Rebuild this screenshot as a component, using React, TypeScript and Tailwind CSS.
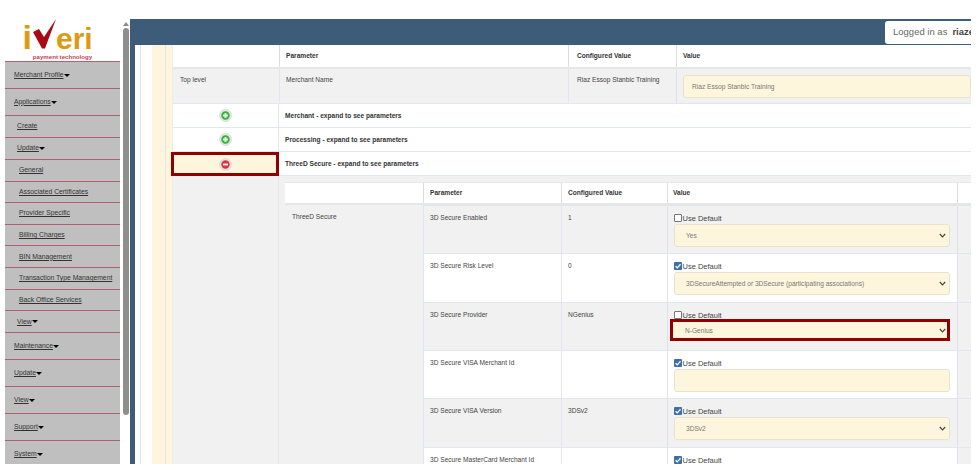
import React from 'react';

const font = 'font-["Liberation_Sans",Arial,sans-serif]';

// menu rows, indent 0 = top level, 1 = sub, 2 = sub sub
const menu = [
  { label: 'Merchant Profile', level: 0, caret: true },
  { label: 'Applications', level: 0, caret: true },
  { label: 'Create', level: 1 },
  { label: 'Update', level: 1, caret: true },
  { label: 'General', level: 2 },
  { label: 'Associated Certificates', level: 2 },
  { label: 'Provider Specific', level: 2 },
  { label: 'Billing Charges', level: 2 },
  { label: 'BIN Management', level: 2 },
  { label: 'Transaction Type Management', level: 2 },
  { label: 'Back Office Services', level: 2 },
  { label: 'View', level: 1, caret: true },
  { label: 'Maintenance', level: 0, caret: true },
  { label: 'Update', level: 0, caret: true },
  { label: 'View', level: 0, caret: true },
  { label: 'Support', level: 0, caret: true },
  { label: 'System', level: 0, caret: true },
];

const params = [
  { name: '3D Secure Enabled', conf: '1', checked: false, value: 'Yes', select: true, h: 'h-[48px]', bg: 'bg-[#f1f1f1]' },
  { name: '3D Secure Risk Level', conf: '0', checked: true, value: '3DSecureAttempted or 3DSecure (participating associations)', select: true, h: 'h-[49px]', bg: 'bg-white' },
  { name: '3D Secure Provider', conf: 'NGenius', checked: false, value: 'N-Genius', select: true, h: 'h-[48px]', bg: 'bg-[#f1f1f1]', marked: true },
  { name: '3D Secure VISA Merchant Id', conf: '', checked: true, value: '', select: false, h: 'h-[48px]', bg: 'bg-white' },
  { name: '3D Secure VISA Version', conf: '3DSv2', checked: true, value: '3DSv2', select: true, h: 'h-[49px]', bg: 'bg-[#f1f1f1]' },
  { name: '3D Secure MasterCard Merchant Id', conf: '', checked: true, value: '', select: false, h: 'h-[48px]', bg: 'bg-white', cut: true },
];

function Logo() {
  return (
    <div className="h-[42px] bg-white flex flex-col items-center">
      <svg width="80" height="33" viewBox="0 0 80 33" className="shrink-0 overflow-visible">
        <text x="-0.5" y="29.5" fontFamily="'Liberation Sans', sans-serif" fontWeight="700" fontSize="34" fill="#dd9a12">i</text>
        <path d="M10 13 L16 10 L21 18 L33 0 L22 29.5 L19 29.5 Z" fill="#a80b14" />
        <text x="33" y="29.5" fontFamily="'Liberation Sans', sans-serif" fontWeight="700" fontSize="30" fill="#dd9a12">eri</text>
      </svg>
      <span className="text-[6.1px] leading-[7px] font-bold text-[#c6424f] mt-[1px] whitespace-nowrap">payment technology</span>
    </div>
  );
}

function Sidebar() {
  return (
    <aside className="w-[115px] ml-[5px] shrink-0 bg-[#bfbfbf]">
      <Logo />
      {menu.map((m, i) => (
        <div
          key={i}
          className={`flex items-center border-t border-[#b0606e] text-[6.8px] text-[#333] whitespace-nowrap ${
            m.level === 0 ? 'h-[27px] pl-[9px]' : m.level === 1 ? 'h-[22px] pl-[12px]' : 'h-[21.6px] pl-[14px]'
          }`}
        >
          <span className="underline">{m.label}</span>
          {m.caret && <span className="w-0 h-0 border-x-[3px] border-t-[3px] border-x-transparent border-t-black" />}
        </div>
      ))}
    </aside>
  );
}

function Scrollbar() {
  return (
    <div className="w-[10px] shrink-0 flex flex-col items-center">
      <span className="mt-[3px] ml-[2px] w-0 h-0 border-x-[3px] border-b-[4px] border-x-transparent border-b-[#8a8a8a]" />
      <div className="ml-[2px] mt-[2px] w-[6px] h-[387px] rounded-[3px] bg-[#8f8f8f]" />
    </div>
  );
}

function RoundIcon({ minus }: { minus?: boolean }) {
  return (
    <svg width="13" height="13" viewBox="0 0 13 13">
      <circle cx="6.5" cy="6.5" r="6" fill="#e6e6e6" stroke="#cfcfcf" strokeWidth="0.6" />
      <circle cx="6.5" cy="6.5" r="4.2" fill={minus ? '#e0323c' : '#2fb52f'} />
      <rect x="4" y="5.6" width="5" height="1.8" fill="#fff" />
      {!minus && <rect x="5.6" y="4" width="1.8" height="5" fill="#fff" />}
    </svg>
  );
}

function UseDefault({ checked }: { checked: boolean }) {
  return (
    <div className="flex items-end h-[11px] text-[7.5px] text-[#444]">
      {checked ? (
        <svg width="8" height="8" viewBox="0 0 8 8" className="mb-[1px] mr-[0.5px]">
          <rect width="8" height="8" rx="1" fill="#3f6fa8" />
          <path d="M1.6 4.2 L3.3 5.9 L6.5 2.2" stroke="#fff" strokeWidth="1.3" fill="none" />
        </svg>
      ) : (
        <span className="mb-[1px] mr-[0.5px] w-[8px] h-[8px] rounded-[1px] border border-[#777] bg-white" />
      )}
      <span className="leading-[9px]">Use Default</span>
    </div>
  );
}

function Field({ value, select, marked }: { value: string; select: boolean; marked?: boolean }) {
  return (
    <div
      className={`flex items-center justify-between bg-[#fef6dc] text-[6.6px] text-[#777] ${
        marked
          ? 'w-[280px] h-[22px] ml-[-4px] mt-[-1px] pl-[12px] pr-[1px] pt-[1px] border-[3px] border-[#8f0000]'
          : 'w-[276px] h-[23px] mt-[1px] pl-[11px] pr-[3px] rounded-[3px] border border-[#e7e2d0]'
      }`}
    >
      <span>{value}</span>
      {select && (
        <svg width="7" height="5" viewBox="0 0 7 5" className="shrink-0">
          <path d="M0.8 1 L3.5 3.8 L6.2 1" stroke="#444" strokeWidth="1.2" fill="none" />
        </svg>
      )}
    </div>
  );
}

function NestedTable() {
  return (
    <div className="flex bg-[#f1f1f1] h-[289px] overflow-hidden">
      <div className="w-[106px] shrink-0 border-r border-[#e3e6ec]" />
      <div className="pl-[6px] pt-[6px] flex-1 min-w-0">
        <div className="grid grid-cols-[138px_138px_106px_290px_14px] h-[23px] bg-white border-t border-b-2 border-[#e6e6e6] items-center font-bold text-[6.6px] text-[#333]">
          <span />
          <span className="h-full flex items-center pl-[6px] border-l border-[#ddd]">Parameter</span>
          <span className="h-full flex items-center pl-[6px] border-l border-[#ddd]">Configured Value</span>
          <span className="h-full flex items-center pl-[5px] border-l border-[#ddd]">Value</span>
          <span className="h-full border-l border-[#ddd]" />
        </div>
        <div className="flex">
          <div className="w-[138px] shrink-0 bg-[#f1f1f1] pl-[7px] pt-[7px] text-[6.6px] text-[#444]">ThreeD Secure</div>
          <div className="flex-1 min-w-0">
            {params.map(p => (
              <div
                key={p.name}
                className={`grid grid-cols-[138px_106px_290px_14px] border-t border-[#e1e7f0] text-[6.6px] text-[#444] ${p.h} ${p.bg}`}
              >
                <span className="pl-[6px] pt-[7px] border-l border-[#e1e7f0]">{p.name}</span>
                <span className="pl-[6px] pt-[7px] border-l border-[#e1e7f0]">{p.conf}</span>
                <div className="pl-[6px] pt-[6px] border-l border-[#dde3ec]">
                  <UseDefault checked={p.checked} />
                  {!p.cut && <Field value={p.value} select={p.select} marked={p.marked} />}
                </div>
                <span className="border-l border-[#dde3ec] bg-[#f1f1f1]" />
              </div>
            ))}
          </div>
        </div>
      </div>
    </div>
  );
}

function ExpandRow({ label, minus }: { label: string; minus?: boolean }) {
  return (
    <div className="flex h-[24px] border-b border-[#e1e7f0] bg-white">
      <div
        className={`shrink-0 flex items-center justify-center ${
          minus ? 'w-[108px] h-[24px] ml-[-2px] bg-[#fef6dc] border-[3px] border-[#8f0000]' : 'w-[106px] border-r border-[#e1e7f0]'
        }`}
      >
        <RoundIcon minus={minus} />
      </div>
      <div className="pl-[6px] flex items-center font-bold text-[6.6px] text-[#333]">{label}</div>
    </div>
  );
}

function MainTable() {
  return (
    <div className="flex-1 min-w-0">
      <div className="grid grid-cols-[106px_289px_108px_295px] h-[24px] border-b-2 border-[#e6e6e6] bg-white items-center font-bold text-[6.6px] text-[#333]">
        <span />
        <span className="h-full flex items-center pl-[6px] border-l border-[#ddd]">Parameter</span>
        <span className="h-full flex items-center pl-[8px] border-l border-[#ddd]">Configured Value</span>
        <span className="h-full flex items-center pl-[6px] border-l border-[#ddd]">Value</span>
      </div>
      <div className="grid grid-cols-[106px_289px_108px_295px] h-[35px] border-b border-[#e1e7f0] bg-[#f1f1f1] text-[6.6px] text-[#444]">
        <span className="pl-[7px] pt-[6px]">Top level</span>
        <span className="pl-[6px] pt-[6px] border-l border-[#e1e7f0]">Merchant Name</span>
        <span className="pl-[8px] pt-[6px] border-l border-[#e1e7f0]">Riaz Essop Stanbic Training</span>
        <div className="pl-[6px] pt-[6px] border-l border-[#dde3ec]">
          <div className="h-[23px] rounded-[3px] border border-[#e7e2d0] bg-[#fef6dc] flex items-center pl-[8px] text-[#777]">
            Riaz Essop Stanbic Training
          </div>
        </div>
      </div>
      <ExpandRow label="Merchant - expand to see parameters" />
      <ExpandRow label="Processing - expand to see parameters" />
      <ExpandRow label="ThreeD Secure - expand to see parameters" minus />
      <NestedTable />
    </div>
  );
}

export default function App() {
  return (
    <div className={`w-[980px] h-[475px] bg-white overflow-hidden pt-[19px] ${font}`}>
      <div className="flex h-[445px]">
        <Sidebar />
        <Scrollbar />
        <main className="w-[841px] flex flex-col bg-[#3d5c79] overflow-hidden">
          <header className="h-[26px] shrink-0 flex justify-end items-start pt-[2px]">
            <div className="w-[86px] h-[23px] bg-white rounded-l-[3px] pl-[8px] flex items-center gap-[5px] text-[9.5px] text-[#666] whitespace-nowrap overflow-hidden">
              <span>Logged in as</span>
              <b className="text-[#444]">riaze</b>
            </div>
          </header>
          <div className="flex flex-1 min-h-0 ml-[5px] bg-white">
            <div className="w-[6px] border-r border-[#e6e6e6]" />
            <div className="w-[11px]" />
            <div className="w-[14px] bg-[#fef6dc] border-r border-[#e4e4e4]" />
            <div className="w-[7px] bg-[#fef6dc] border-r border-[#ececec]" />
            <MainTable />
          </div>
        </main>
      </div>
    </div>
  );
}
